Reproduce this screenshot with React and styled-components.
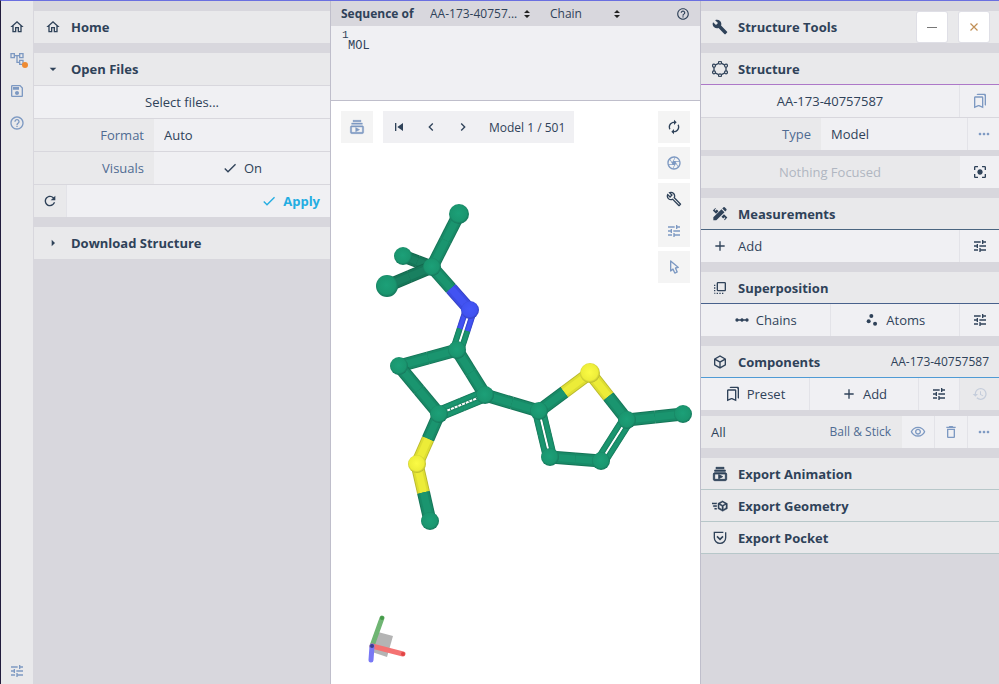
import { useState } from "react";
import styled, { createGlobalStyle } from "styled-components";
import {
  MdAdd,
  MdArrowDropDown,
  MdArrowRight,
  MdAutorenew,
  MdBuild,
  MdCenterFocusStrong,
  MdCheck,
  MdDeleteOutline,
  MdFlipToFront,
  MdHelpOutline,
  MdLinearScale,
  MdMoreHoriz,
  MdNavigateBefore,
  MdNavigateNext,
  MdOutlineAccountTree,
  MdOutlineBookmarks,
  MdOutlineBuild,
  MdOutlineCamera,
  MdOutlineHome,
  MdOutlineSave,
  MdOutlineVisibility,
  MdRefresh,
  MdRestore,
  MdScatterPlot,
  MdSkipPrevious,
  MdTune,
} from "react-icons/md";

const ink = "#2f4259";
const muted = "#4f6b92";
const faded = "#7d99c2";
const gap = "#d8d7dd";
const rowBg = "#e9e9eb";
const controlBg = "#f0f0f3";

const GlobalStyle = createGlobalStyle`
  * {
    box-sizing: border-box;
  }
  body {
    margin: 0;
    color: ${ink};
    font-family: "Open Sans", "Noto Sans", sans-serif;
    font-size: 13px;
    line-height: 20px;
  }
  button, select {
    margin: 0;
    padding: 0;
    border: none;
    border-radius: 0;
    color: inherit;
    font: inherit;
    appearance: none;
    cursor: pointer;
  }
  svg {
    flex-shrink: 0;
  }
`;

const Layout = styled.div`
  display: flex;
  min-height: 100vh;
  border-top: 1px solid #6a6fe0;
  border-left: 1px solid #221c3d;
  background: ${gap};
`;
const Rail = styled.nav`
  display: flex;
  flex-direction: column;
  width: 33px;
  padding-top: 10px;
  border-right: 1px solid ${gap};
  background: ${rowBg};
`;
const RailButton = styled.button`
  position: relative;
  display: flex;
  align-items: center;
  justify-content: center;
  height: ${(props) => (props.$last ? "26px" : "32px")};
  background: none;
  color: ${(props) => (props.$active ? ink : faded)};
  font-size: 16px;
  ${(props) => props.$last && "margin-top: auto;"}
`;
const Dot = styled.span`
  position: absolute;
  right: 5px;
  bottom: 7px;
  width: 6px;
  height: 6px;
  border-radius: 50%;
  background: #ee8b33;
`;

const Panel = styled.aside`
  display: flex;
  flex-direction: column;
  gap: 10px;
  flex: none;
  width: ${(props) => props.$width};
  padding-top: 10px;
`;
const Section = styled.section`
  display: flex;
  flex-direction: column;
`;
const Header = styled.h2`
  display: flex;
  align-items: center;
  gap: 10px;
  height: 32px;
  margin: 0;
  padding: 0 10px 0 11px;
  border-bottom: ${(props) => (props.$line ? `1px solid ${props.$line}` : "none")};
  background: ${rowBg};
  font-size: 13px;
  font-weight: 700;
  & > svg {
    font-size: 16px;
  }
`;
const HeaderButton = styled.button`
  display: flex;
  align-items: center;
  gap: 10px;
  flex: 1;
  height: 100%;
  background: none;
  text-align: left;
  & > svg {
    font-size: 16px;
  }
`;
const HeaderNote = styled.span`
  font-size: 12px;
  font-weight: 400;
`;
const WindowButton = styled.button`
  display: flex;
  align-items: center;
  justify-content: center;
  width: 30px;
  height: 30px;
  border-radius: 2px;
  background: #fff;
  box-shadow: 0 0 0 1px #dfdfe6;
  color: ${(props) => props.color};
`;
const WindowButtons = styled.div`
  display: flex;
  gap: 12px;
  margin-left: auto;
`;

const Rows = styled.div`
  display: flex;
  flex-direction: column;
  gap: 1px;
  padding-top: ${(props) => (props.$ruled ? "1px" : "0")};
`;
const Row = styled.div`
  display: flex;
  gap: 1px;
  height: 32px;
  margin-top: ${(props) => (props.$spaced ? "6px" : "0")};
  background: ${(props) => (props.$plain ? rowBg : "#e3e3e8")};
`;
const Label = styled.label`
  display: flex;
  align-items: center;
  justify-content: flex-end;
  flex: none;
  width: 120px;
  padding-right: 10px;
  margin-right: -1px;
  background: ${rowBg};
  color: ${muted};
`;
const Select = styled.select`
  flex: 1;
  min-width: 0;
  padding: 0 10px;
  background: ${controlBg};
`;
const Button = styled.button`
  display: flex;
  align-items: center;
  justify-content: ${(props) => props.$align || "center"};
  gap: ${(props) => (props.$align ? "10px" : "6px")};
  flex: 1;
  min-width: 0;
  padding: 0 10px;
  padding-left: ${(props) => (props.$align ? "11px" : "10px")};
  background: ${controlBg};
  & > svg {
    font-size: 16px;
  }
  &:disabled {
    background: ${rowBg};
    color: #b0b6c1;
    cursor: default;
  }
`;
const ApplyButton = styled(Button)`
  gap: 6px;
  color: #24ade2;
  font-weight: 700;
`;
const IconButton = styled.button`
  display: flex;
  align-items: center;
  justify-content: center;
  flex: none;
  width: ${(props) => props.$width || "32px"};
  background: ${(props) => (props.$plain ? rowBg : controlBg)};
  color: ${(props) => (props.$faded ? faded : ink)};
  font-size: 16px;
  &:disabled {
    background: ${rowBg};
    color: #c5cddb;
  }
`;
const ComponentName = styled.button`
  flex: 1;
  padding: 0 10px;
  background: ${rowBg};
  text-align: left;
`;
const ReprName = styled.button`
  padding: 0 11px;
  margin-left: -1px;
  margin-right: -1px;
  background: ${rowBg};
  color: ${muted};
  font-size: 12px;
`;

const Main = styled.main`
  display: flex;
  flex: 1;
  flex-direction: column;
  min-width: 0;
  border: solid #bfbecb;
  border-width: 0 1px;
  background: #fff;
`;
const SequenceBar = styled.div`
  display: flex;
  align-items: center;
  height: 25px;
  padding: 0 10px;
  background: ${gap};
  font-size: 12px;
  & > b {
    width: 79px;
    white-space: nowrap;
  }
`;
const Picker = styled.div`
  display: grid;
  align-items: center;
  width: ${(props) => props.$width};
  & > * {
    grid-area: 1 / 1;
  }
  & > select {
    padding: 0 10px;
    background: none;
  }
  & > svg {
    justify-self: end;
    margin-right: 10px;
    pointer-events: none;
  }
`;
const HelpButton = styled.button`
  display: flex;
  margin-left: auto;
  background: none;
  font-size: 14px;
`;
const Sequence = styled.div`
  height: 75px;
  padding: 3px 11px;
  border-bottom: 1px solid #bfbecb;
  background: ${controlBg};
  font-family: "Liberation Mono", monospace;
  font-size: 12px;
  line-height: 12px;
  & > sup {
    display: block;
    height: 11px;
    font-size: 11px;
    vertical-align: baseline;
  }
  & > span {
    padding-left: 6px;
  }
`;
const Viewport = styled.div`
  position: relative;
  flex: 1;
  min-height: 0;
`;
const Canvas = styled.svg`
  position: absolute;
  inset: 0;
  width: 100%;
  height: 100%;
`;
const Axes = styled.svg`
  position: absolute;
  left: 29px;
  bottom: 14px;
`;
const TopLeft = styled.div`
  position: absolute;
  top: 10px;
  left: 10px;
  display: flex;
  gap: 10px;
`;
const TopRight = styled.div`
  position: absolute;
  top: 10px;
  right: 10px;
  display: flex;
  flex-direction: column;
  gap: 4px;
`;
const Group = styled.div`
  display: flex;
  flex-direction: ${(props) => (props.$column ? "column" : "row")};
  align-items: center;
  background: ${(props) => (props.$solid ? controlBg : "#f4f4f4")};
  font-size: 12px;
`;
const ToolButton = styled.button`
  display: flex;
  align-items: center;
  justify-content: center;
  width: 32px;
  height: 32px;
  background: none;
  color: ${(props) => (props.$faded ? faded : ink)};
  font-size: 16px;
`;
const ModelLabel = styled.span`
  padding: 1px 9px 0 10px;
`;

const Glyph = ({ d, bold = 0 }) => (
  <svg
    viewBox="0 0 24 24"
    width="1em"
    height="1em"
    fill="currentColor"
    stroke="currentColor"
    strokeWidth={bold}
  >
    <path d={d} />
  </svg>
);
const Cube = () => (
  <Glyph d="M21,16.5C21,16.88 20.79,17.21 20.47,17.38L12.57,21.82C12.41,21.94 12.21,22 12,22C11.79,22 11.59,21.94 11.43,21.82L3.53,17.38C3.21,17.21 3,16.88 3,16.5V7.5C3,7.12 3.21,6.79 3.53,6.62L11.43,2.18C11.59,2.06 11.79,2 12,2C12.21,2 12.41,2.06 12.57,2.18L20.47,6.62C20.79,6.79 21,7.12 21,7.5V16.5M12,4.15L6.04,7.5L12,10.85L17.96,7.5L12,4.15M5,15.91L11,19.29V12.58L5,9.21V15.91M19,15.91V9.21L13,12.58V19.29L19,15.91Z" />
);
const CubeSend = () => (
  <Glyph
    bold={0.6}
    d="M16,4L9,8.04V15.96L16,20L23,15.96V8.04M16,6.31L19.8,8.5L16,10.69L12.21,8.5M0,7V9H7V7M11,10.11L15,12.42V17.11L11,14.81M21,10.11V14.81L17,17.11V12.42M2,11V13H7V11M4,15V17H7V15"
  />
);
const Cursor = () => (
  <Glyph d="M10.07,14.27C10.57,14.03 11.16,14.25 11.4,14.75L13.7,19.74L15.5,18.89L13.19,13.91C12.95,13.41 13.17,12.81 13.67,12.58L13.95,12.5L16.25,12.05L8,5.12V15.9L9.82,14.43L10.07,14.27M13.64,21.97C13.14,22.21 12.54,22 12.31,21.5L10.13,16.76L7.62,18.78C7.45,18.92 7.24,19 7,19A1,1 0 0,1 6,18V3A1,1 0 0,1 7,2C7.24,2 7.47,2.09 7.64,2.23L7.65,2.22L19.14,11.86C19.57,12.22 19.62,12.85 19.27,13.27C19.12,13.45 18.91,13.57 18.7,13.61L15.54,14.23L17.74,18.96C18,19.46 17.76,20.05 17.26,20.28L13.64,21.97Z" />
);
const Frames = ({ bold }) => (
  <Glyph
    bold={bold}
    d="M4 6h16v2H4zm2-4h12v2H6zm14 8H4c-1.1 0-2 .9-2 2v8c0 1.1.9 2 2 2h16c1.1 0 2-.9 2-2v-8c0-1.1-.9-2-2-2zm0 10H4v-8h16v8zm-10-7.27v6.53L16 16z"
  />
);
// pencil laid across a notched ruler
const Measure = () => (
  <Glyph d="M2,21.5V17L14.2,4.8L18.7,9.3L6.5,21.5ZM15.4,3.6L17.2,1.9Q18.1,1.1 19,1.9L21.6,4.5Q22.4,5.4 21.6,6.3L19.9,8.1ZM9.8,7.8L7.2,5.2L5.2,7.2L3.9,5.9L5.9,3.9L5,3L1.2,6.8L6,11.6ZM14.2,16.2L16.8,18.8L18.8,16.8L20.1,18.1L18.1,20.1L19.2,21.2L23,17.4L18,12.4Z" />
);
const Pocket = () => (
  <svg viewBox="0 0 24 24" width="1em" height="1em" fill="none" stroke="currentColor" strokeWidth="2">
    <path d="M17 3.5H3.5V11.5a8.5 8.5 0 0 0 17 0V3.5" />
    <path d="M7.5 9.5L12 14L16.5 9.5" strokeWidth="2.4" />
  </svg>
);
const ring = [[12, 2.5], [21, 7], [21, 17], [12, 21.5], [3, 17], [3, 7]];
const Molecule = () => (
  <svg viewBox="0 0 24 24" width="1em" height="1em" fill="none" stroke="currentColor" strokeWidth="2">
    <polygon points={ring.join(" ")} />
    {ring.map(([x, y]) => (
      <circle key={`${x}-${y}`} cx={x} cy={y} r="2.2" fill={rowBg} strokeWidth="1.8" />
    ))}
  </svg>
);
const UpDown = () => (
  <svg width="6" height="8" viewBox="0 0 6 8" fill="#222">
    <path d="M0 3L3 0L6 3ZM0 5H6L3 8Z" />
  </svg>
);

// x, y, radius, element
const atoms = {
  a: [459, 214, 10, "C"],
  b: [432, 267, 9, "C"],
  c: [403, 256, 9, "C"],
  d: [387, 286, 11, "C"],
  n: [470, 310, 9, "N"],
  e: [457, 350, 9, "C"],
  f: [399, 366, 9, "C"],
  g: [439, 414, 9, "C"],
  h: [485, 395, 9, "C"],
  s: [417, 464, 9, "S"],
  i: [430, 521, 9, "C"],
  j: [539, 411, 9, "C"],
  t: [590, 373, 10, "S"],
  k: [627, 420, 9, "C"],
  l: [683, 414, 9, "C"],
  m: [550, 457, 9, "C"],
  o: [601, 461, 9, "C"],
};
const bonds = [
  ["c", "b", "dim"],
  ["a", "b"],
  ["d", "b", "dim"],
  ["b", "n"],
  ["n", "e", "double"],
  ["e", "f"],
  ["f", "g"],
  ["e", "h"],
  ["g", "h", "aromatic"],
  ["g", "s"],
  ["s", "i"],
  ["h", "j"],
  ["j", "t"],
  ["t", "k"],
  ["k", "l"],
  ["j", "m", "double"],
  ["m", "o"],
  ["o", "k", "double"],
];
const shades = {
  C: ["#157557", "#188a67", "#1a956f"],
  dim: ["#13654b", "#167658", "#198060"],
  N: ["#3440c0", "#3c4ce4", "#4253f2"],
  S: ["#b9b92c", "#dede32", "#ecec38"],
};

const Stick = ({ from, to, shade, width }) =>
  shades[shade].map((color, i) => (
    <line
      key={color}
      x1={from[0]}
      y1={from[1]}
      x2={to[0]}
      y2={to[1]}
      stroke={color}
      strokeWidth={width * [1, 0.86, 0.55][i]}
    />
  ));

const Bond = ({ from, to, kind }) => {
  const [x1, y1, , el1] = atoms[from];
  const [x2, y2, , el2] = atoms[to];
  const length = Math.hypot(x2 - x1, y2 - y1);
  const nx = -(y2 - y1) / length;
  const ny = (x2 - x1) / length;
  const multiple = kind === "double" || kind === "aromatic";
  return (multiple ? [-4, 4] : [0]).map((shift) => {
    const p = [x1 + nx * shift, y1 + ny * shift];
    const q = [x2 + nx * shift, y2 + ny * shift];
    const mid = [(p[0] + q[0]) / 2, (p[1] + q[1]) / 2];
    const width = multiple ? 6 : 13;
    return (
      <g key={shift}>
        <Stick from={p} to={mid} shade={kind === "dim" ? "dim" : el1} width={width} />
        <Stick from={mid} to={q} shade={kind === "dim" ? "dim" : el2} width={width} />
        {kind === "aromatic" && shift > 0 && (
          <line
            x1={x1}
            y1={y1}
            x2={x2}
            y2={y2}
            stroke="#157557"
            strokeWidth="2"
            strokeDasharray="1 3"
          />
        )}
      </g>
    );
  });
};

const Structure = () => (
  <Canvas viewBox="331 101 369 583" role="img" aria-label="Ball and stick model">
    <defs>
      {[
        ["C", "#1ca078", "#1a966f", "#15755a"],
        ["N", "#4658fa", "#4052f0", "#3440bd"],
        ["S", "#fbfb45", "#eeee3a", "#b4b42c"],
      ].map(([id, light, base, edge]) => (
        <radialGradient key={id} id={`atom${id}`} cx="48%" cy="46%" r="54%">
          <stop offset="0" stopColor={light} />
          <stop offset="0.75" stopColor={base} />
          <stop offset="1" stopColor={edge} />
        </radialGradient>
      ))}
    </defs>
    {bonds.map(([from, to, kind]) => (
      <Bond key={from + to} from={from} to={to} kind={kind} />
    ))}
    {Object.entries(atoms).map(([id, [x, y, r, el]]) => (
      <circle key={id} cx={x} cy={y} r={r} fill={`url(#atom${el})`} />
    ))}
  </Canvas>
);

const AxesHelper = () => (
  <Axes width="54" height="60" viewBox="0 0 54 60" strokeLinecap="round" strokeWidth="5">
    <path d="M18 22L33 26L27 47L12 42Z" fill="#b4b4b4" />
    <path d="M12 36L22 8" stroke="#6fb573" />
    <path d="M12 36L43 44" stroke="#f47272" />
    <path d="M12 36L11 50" stroke="#7878f5" />
    <circle cx="12" cy="36" r="2" fill="#3d3d8c" />
    <circle cx="43" cy="44" r="2" fill="#e04444" />
    <circle cx="22" cy="8" r="2" fill="#449a49" />
  </Axes>
);

const LeftPanel = () => {
  const [open, setOpen] = useState(true);
  const [visuals, setVisuals] = useState(true);
  return (
    <Panel $width="296px">
      <Header>
        <MdOutlineHome />
        Home
      </Header>
      <Section>
        <Header>
          <HeaderButton onClick={() => setOpen(!open)}>
            {open ? <MdArrowDropDown /> : <MdArrowRight />}
            Open Files
          </HeaderButton>
        </Header>
        {open && (
          <Rows $ruled>
            <Row>
              <Button>Select files...</Button>
            </Row>
            <Row>
              <Label htmlFor="format">Format</Label>
              <Select id="format">
                <option>Auto</option>
              </Select>
            </Row>
            <Row>
              <Label htmlFor="visuals">Visuals</Label>
              <Button id="visuals" onClick={() => setVisuals(!visuals)}>
                {visuals && <MdCheck />}
                {visuals ? "On" : "Off"}
              </Button>
            </Row>
            <Row>
              <IconButton $plain aria-label="Reset">
                <MdRefresh />
              </IconButton>
              <ApplyButton $align="flex-end">
                <MdCheck />
                Apply
              </ApplyButton>
            </Row>
          </Rows>
        )}
      </Section>
      <Header>
        <HeaderButton>
          <MdArrowRight />
          Download Structure
        </HeaderButton>
      </Header>
    </Panel>
  );
};

const RightPanel = () => (
  <Panel $width="298px">
    <Header>
      <MdBuild />
      Structure Tools
      <WindowButtons>
        <WindowButton color="#777" aria-label="Minimize">
          <svg width="10" height="10" stroke="currentColor">
            <path d="M0 5.5H10" />
          </svg>
        </WindowButton>
        <WindowButton color="#c08f55" aria-label="Close">
          <svg width="8" height="8" stroke="currentColor" strokeWidth="1.2">
            <path d="M0.5 0.5L7.5 7.5M7.5 0.5L0.5 7.5" />
          </svg>
        </WindowButton>
      </WindowButtons>
    </Header>
    <Section>
      <Header $line="#ad78c8">
        <Molecule />
        Structure
      </Header>
      <Rows>
        <Row>
          <Button>AA-173-40757587</Button>
          <IconButton $width="39px" $faded aria-label="Presets">
            <MdOutlineBookmarks />
          </IconButton>
        </Row>
        <Row>
          <Label htmlFor="type">Type</Label>
          <Select id="type">
            <option>Model</option>
          </Select>
          <IconButton $width="31px" $faded aria-label="Type options">
            <MdMoreHoriz />
          </IconButton>
        </Row>
      </Rows>
      <Row $spaced $plain>
        <Button disabled>Nothing Focused</Button>
        <IconButton $width="39px" aria-label="Focus">
          <MdCenterFocusStrong />
        </IconButton>
      </Row>
    </Section>
    <Section>
      <Header $line="#4a6580">
        <Measure />
        Measurements
      </Header>
      <Row>
        <Button $align="flex-start">
          <MdAdd />
          Add
        </Button>
        <IconButton $width="39px" aria-label="Measurement options">
          <MdTune />
        </IconButton>
      </Row>
    </Section>
    <Section>
      <Header $line="#48618c">
        <MdFlipToFront />
        Superposition
      </Header>
      <Row>
        <Button>
          <MdLinearScale />
          Chains
        </Button>
        <Button>
          <MdScatterPlot />
          Atoms
        </Button>
        <IconButton $width="39px" aria-label="Superposition options">
          <MdTune />
        </IconButton>
      </Row>
    </Section>
    <Section>
      <Header $line="#4f9bd5">
        <HeaderButton>
          <Cube />
          Components
        </HeaderButton>
        <HeaderNote>AA-173-40757587</HeaderNote>
      </Header>
      <Row>
        <Button>
          <MdOutlineBookmarks />
          Preset
        </Button>
        <Button>
          <MdAdd />
          Add
        </Button>
        <IconButton $width="40px" aria-label="Component options">
          <MdTune />
        </IconButton>
        <IconButton $width="39px" disabled aria-label="Undo">
          <MdRestore />
        </IconButton>
      </Row>
      <Row $spaced>
        <ComponentName>All</ComponentName>
        <ReprName>Ball &amp; Stick</ReprName>
        <IconButton $faded aria-label="Toggle visibility">
          <MdOutlineVisibility />
        </IconButton>
        <IconButton $faded aria-label="Remove">
          <MdDeleteOutline />
        </IconButton>
        <IconButton $width="31px" $faded aria-label="More">
          <MdMoreHoriz />
        </IconButton>
      </Row>
    </Section>
    <Section>
      <Header $line="#b7c7c9">
        <HeaderButton>
          <Frames bold={1.2} />
          Export Animation
        </HeaderButton>
      </Header>
      <Header $line="#b7c7c9">
        <HeaderButton>
          <CubeSend />
          Export Geometry
        </HeaderButton>
      </Header>
      <Header $line="#b7c7c9">
        <HeaderButton>
          <Pocket />
          Export Pocket
        </HeaderButton>
      </Header>
    </Section>
  </Panel>
);

const App = () => {
  return (
    <>
      <GlobalStyle />
      <Layout>
        <Rail>
          <RailButton $active aria-label="Home">
            <MdOutlineHome />
          </RailButton>
          <RailButton aria-label="State tree">
            <MdOutlineAccountTree />
            <Dot />
          </RailButton>
          <RailButton aria-label="Save">
            <MdOutlineSave />
          </RailButton>
          <RailButton aria-label="Help">
            <MdHelpOutline />
          </RailButton>
          <RailButton $last aria-label="Settings">
            <MdTune />
          </RailButton>
        </Rail>
        <LeftPanel />
        <Main>
          <SequenceBar>
            <b>Sequence of</b>
            <Picker $width="120px">
              <select aria-label="Structure">
                <option>AA-173-40757...</option>
              </select>
              <UpDown />
            </Picker>
            <Picker $width="90px">
              <select aria-label="Mode">
                <option>Chain</option>
              </select>
              <UpDown />
            </Picker>
            <HelpButton aria-label="Sequence help">
              <MdHelpOutline />
            </HelpButton>
          </SequenceBar>
          <Sequence>
            <sup>1</sup>
            <span>MOL</span>
          </Sequence>
          <Viewport>
            <Structure />
            <AxesHelper />
            <TopLeft>
              <Group>
                <ToolButton $faded aria-label="Animation">
                  <Frames bold={0.6} />
                </ToolButton>
              </Group>
              <Group $solid>
                <ToolButton aria-label="First model">
                  <MdSkipPrevious />
                </ToolButton>
                <ToolButton aria-label="Previous model">
                  <MdNavigateBefore />
                </ToolButton>
                <ToolButton aria-label="Next model">
                  <MdNavigateNext />
                </ToolButton>
                <ModelLabel>Model 1 / 501</ModelLabel>
              </Group>
            </TopLeft>
            <TopRight>
              <Group>
                <ToolButton aria-label="Reset camera">
                  <MdAutorenew />
                </ToolButton>
              </Group>
              <Group>
                <ToolButton $faded aria-label="Screenshot">
                  <MdOutlineCamera />
                </ToolButton>
              </Group>
              <Group $column>
                <ToolButton aria-label="Toggle controls">
                  <MdOutlineBuild />
                </ToolButton>
                <ToolButton $faded aria-label="Viewport settings">
                  <MdTune />
                </ToolButton>
              </Group>
              <Group>
                <ToolButton $faded aria-label="Selection mode">
                  <Cursor />
                </ToolButton>
              </Group>
            </TopRight>
          </Viewport>
        </Main>
        <RightPanel />
      </Layout>
    </>
  );
};

export default App;
